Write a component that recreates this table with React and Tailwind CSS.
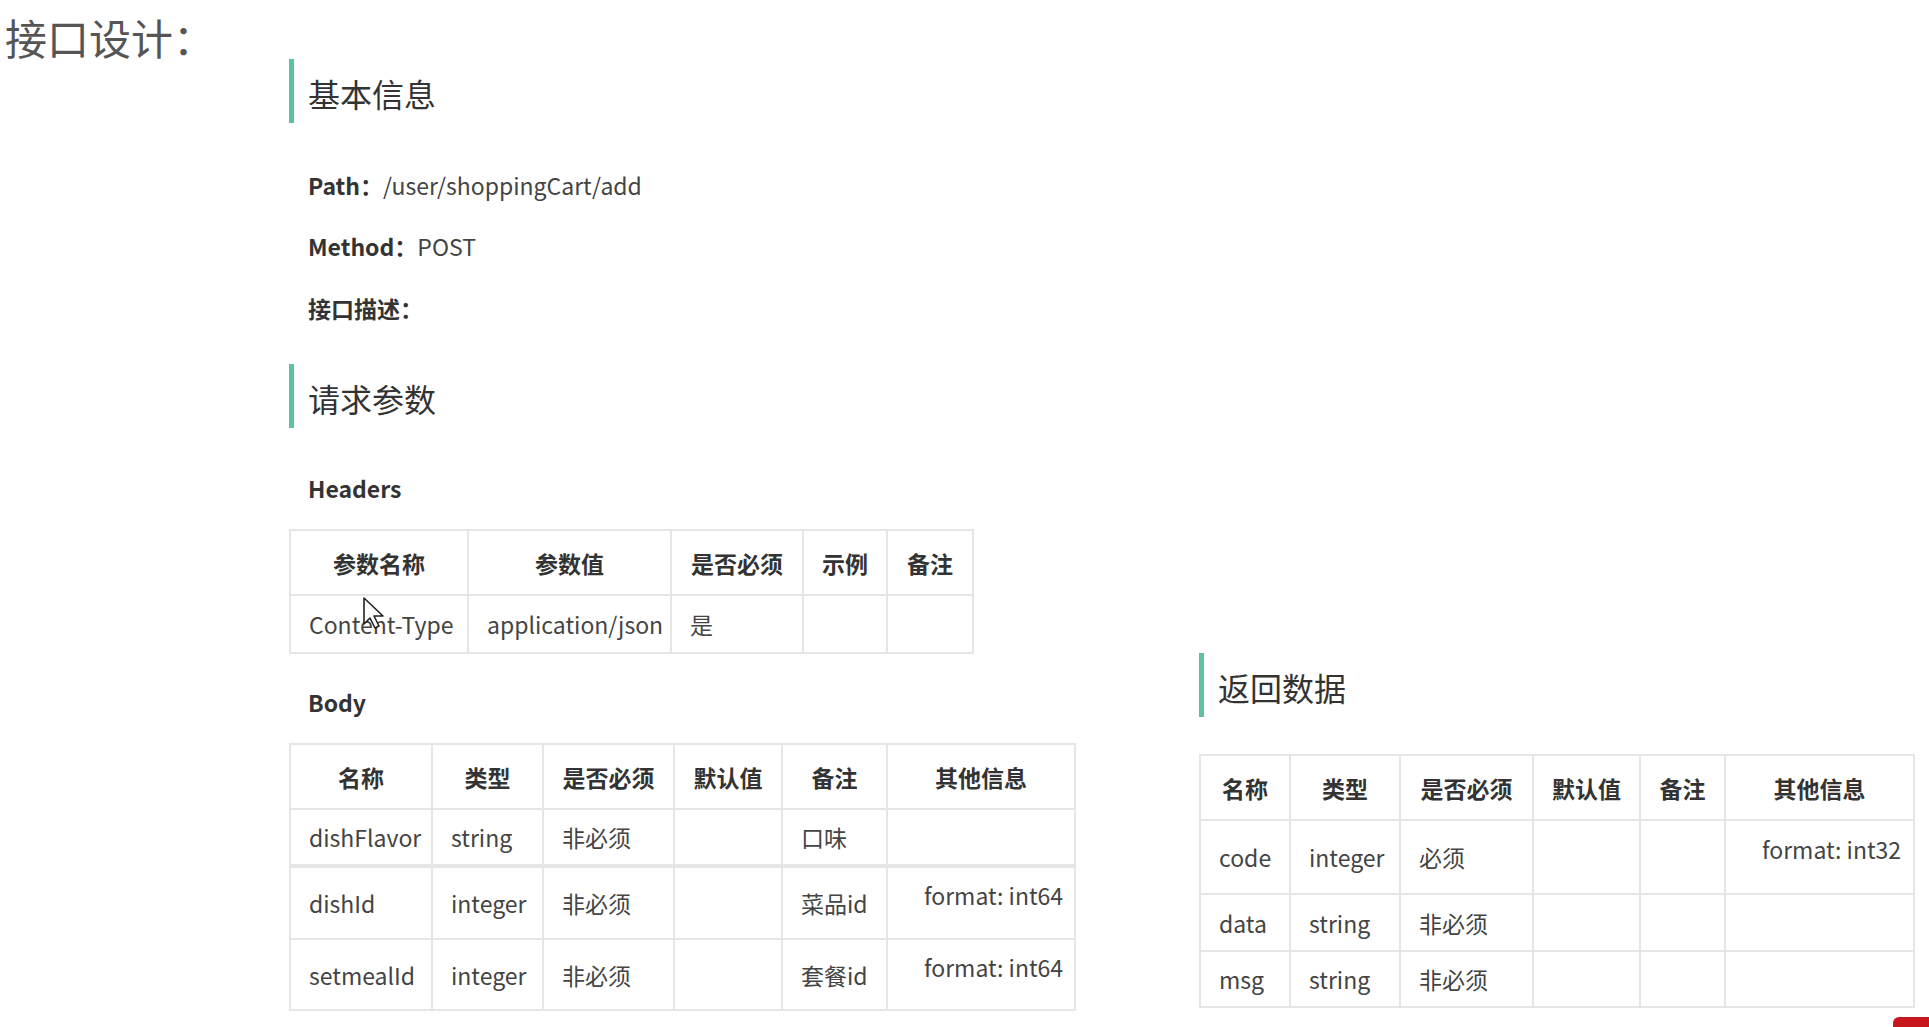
import React from 'react';

const FONT = { fontFamily: '"Noto Sans CJK SC", "Noto Sans", sans-serif' };

const cell = 'border-2 border-[#e6e6e6] px-[18px] py-0 align-middle whitespace-nowrap text-[#444] font-normal';
const head = 'border-2 border-[#e6e6e6] p-0 text-center align-middle whitespace-nowrap font-bold text-[#333]';

function Heading({ children }) {
  return (
    <div className="flex items-center h-[64px]">
      <span className="w-[5px] h-full bg-[#5cc29f] shrink-0" />
      <span className="ml-[14px] mt-[4px] text-[32px] leading-none text-[#333]">{children}</span>
    </div>
  );
}

function Field({ label, value, className }) {
  return (
    <p className={`h-[36px] leading-[36px] text-[23px] text-[#444] ${className}`}>
      <b className="font-bold text-[#333]">{label}：</b>
      {value && <span>{value}</span>}
    </p>
  );
}

function Format({ children }) {
  return <div className="pl-[18px] mb-[16px] leading-[30px]">{children}</div>;
}

function DataTable({ cols, header, rows, heights, width, thickRow = -1 }) {
  return (
    <table className="border-collapse table-fixed text-[23px] leading-[30px]" style={{ width }}>
      <colgroup>
        {cols.map((w, i) => <col key={i} style={{ width: w }} />)}
      </colgroup>
      <thead>
        <tr style={{ height: heights[0] }}>
          {header.map((h) => <th key={h} className={head}>{h}</th>)}
        </tr>
      </thead>
      <tbody>
        {rows.map((r, i) => (
          <tr key={i} style={{ height: heights[i + 1] }}>
            {r.map((c, j) => (
              <td key={j} className={i === thickRow ? `${cell} border-t-[4px]` : cell}>{c}</td>
            ))}
          </tr>
        ))}
      </tbody>
    </table>
  );
}

const BODY_HEAD = ['名称', '类型', '是否必须', '默认值', '备注', '其他信息'];

export default function App() {
  return (
    <div className="relative w-[1929px] h-[1027px] bg-white overflow-hidden" style={FONT}>
      <div className="h-[59px] pl-[5px] pt-[10px] text-[42px] leading-[54px] text-[#555]">接口设计：</div>

      <div className="flex items-end pl-[289px]">
        <div className="w-[910px] shrink-0">
          <Heading>基本信息</Heading>
          <div className="pl-[19px]">
            <Field className="mt-[44px]" label="Path" value="/user/shoppingCart/add" />
            <Field className="mt-[25px]" label="Method" value="POST" />
            <Field className="mt-[26px]" label="接口描述" />
          </div>

          <div className="mt-[38px]"><Heading>请求参数</Heading></div>
          <p className="mt-[42px] pl-[19px] h-[36px] leading-[36px] text-[23px] font-bold text-[#333]">Headers</p>
          <div className="mt-[23px]">
            <DataTable
              width={683}
              cols={[178, 203, 132, 84, 86]}
              heights={[65, 58]}
              header={['参数名称', '参数值', '是否必须', '示例', '备注']}
              rows={[['Content-Type', 'application/json', '是', '', '']]}
            />
          </div>

          <p className="mt-[30px] pl-[19px] h-[36px] leading-[36px] text-[23px] font-bold text-[#333]">Body</p>
          <div className="mt-[23px]">
            <DataTable
              width={785}
              cols={[142, 111, 131, 108, 105, 188]}
              heights={[65, 57, 73, 71]}
              thickRow={1}
              header={BODY_HEAD}
              rows={[
                ['dishFlavor', 'string', '非必须', '', '口味', ''],
                ['dishId', 'integer', '非必须', '', '菜品id', <Format>format: int64</Format>],
                ['setmealId', 'integer', '非必须', '', '套餐id', <Format>format: int64</Format>],
              ]}
            />
          </div>
        </div>

        <div className="mb-[3px]">
          <Heading>返回数据</Heading>
          <div className="mt-[37px]">
            <DataTable
              width={714}
              cols={[90, 110, 133, 107, 85, 189]}
              heights={[65, 74, 57, 56]}
              header={BODY_HEAD}
              rows={[
                ['code', 'integer', '必须', '', '', <Format>format: int32</Format>],
                ['data', 'string', '非必须', '', '', ''],
                ['msg', 'string', '非必须', '', '', ''],
              ]}
            />
          </div>
        </div>
      </div>

      {/* mouse pointer over the headers table */}
      <svg className="absolute left-[362px] top-[596px]" width="26" height="34" viewBox="0 0 13 17">
        <path d="M1 1 L1 14 L4 11 L6.5 16 L8.5 15 L6 10 L10.5 10 Z" fill="white" stroke="#222" strokeWidth="0.8" strokeLinejoin="round" />
      </svg>

      {/* taskbar corner */}
      <div className="absolute right-0 bottom-0 w-[36px] h-[10px] bg-[#c8161d] rounded-tl-[6px]" />
    </div>
  );
}
